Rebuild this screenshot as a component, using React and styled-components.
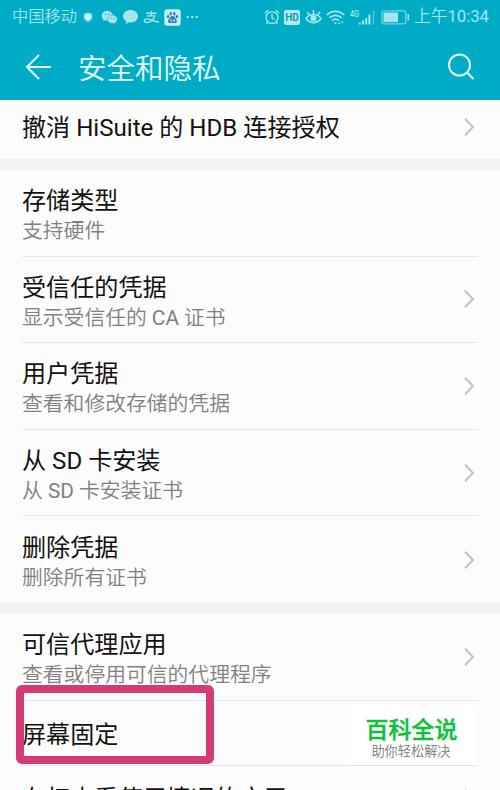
import styled, { createGlobalStyle } from 'styled-components';

const GlobalStyle = createGlobalStyle`
  * {
    box-sizing: border-box;
  }

  body {
    margin: 0;
    overflow: hidden;
    background: #fcfcfc;
    font-family: Roboto, 'Noto Sans CJK SC', sans-serif;
  }
`;

const Screen = styled.div`
  position: relative;
  width: 500px;
  height: 790px;
  overflow: hidden;
  background: #fcfcfc;
`;

const Header = styled.header`
  height: 100px;
  background: #00acc5;
  color: #e6fcff;
`;

const StatusBar = styled.div`
  height: 34px;
  padding: 0 11px 0 12px;
  display: flex;
  align-items: center;
  justify-content: space-between;
  color: #a5e6ee;
`;

const StatusGroup = styled.div`
  display: flex;
  align-items: center;
  gap: ${({ $gap }) => $gap}px;

  svg {
    display: block;
    flex: none;
  }
`;

const Carrier = styled.span`
  margin-right: 1px;
  font-size: 16.3px;
  font-weight: 350;
  line-height: 34px;
  white-space: nowrap;
`;

const Clock = styled(Carrier)`
  font-size: 16.7px;
  margin: 0 0 0 -1px;
`;

const Digits = styled.span`
  font-weight: 400;
`;

const TitleBar = styled.div`
  height: 66px;
  padding: 0 25px 0 25px;
  display: flex;
  align-items: center;
`;

const Title = styled.h1`
  flex: 1;
  margin: 5px 0 0 26px;
  font-size: 28.5px;
  font-weight: 350;
  line-height: 40px;
`;

const Group = styled.section`
  border-bottom: ${({ $last }) => ($last ? 'none' : '11px solid #f2f2f2')};
`;

const Row = styled.div`
  height: ${({ $height }) => $height || 86.6}px;
  margin: 0 22px;
  padding: 0 3px ${({ $bottom }) => $bottom || 0}px 0;
  display: flex;
  align-items: center;
  justify-content: space-between;
  border-bottom: ${({ $line }) => ($line ? '1px solid #e6e6e6' : 'none')};
`;

const RowText = styled.div`
  padding-top: ${({ $top }) => $top || 0}px;
  white-space: nowrap;
`;

const RowTitle = styled.div`
  font-size: 24.1px;
  font-weight: 400;
  line-height: 31px;
  color: #111;
`;

const RowSummary = styled.div`
  font-size: 20.8px;
  font-weight: 350;
  line-height: 29px;
  color: #808080;
`;

const Latin = styled.span`
  font-weight: 400;
`;

const Highlight = styled.div`
  position: absolute;
  left: 16px;
  top: 685px;
  width: 198px;
  height: 79px;
  border: 8px solid #d53a75;
  border-radius: 6px;
`;

const Watermark = styled.div`
  position: absolute;
  left: 350px;
  top: 705px;
  width: 125px;
  height: 59px;
  padding-top: 10px;
  background: #fff;
  text-align: center;
`;

const WatermarkName = styled.div`
  margin-left: -2px;
  font-size: 23px;
  font-weight: 500;
  line-height: 31px;
  color: #0cc23a;
  -webkit-text-stroke: 0.4px #0cc23a;
`;

const WatermarkSlogan = styled.div`
  margin-left: -3px;
  font-size: 13.2px;
  font-weight: 350;
  line-height: 11px;
  color: #777;
`;

const ShieldIcon = () => (
  <svg width="14" height="14" viewBox="0 0 14 14">
    <path d="M6 1 11 3v4c0 3-2 5-5 6-3-1-5-3-5-6V3Z" fill="#22b0f0" />
    <path d="M6 2.900 9.700 4.300V7c0 2-1.600 3.700-3.700 4.500C3.900 10.700 2.300 9 2.300 7V4.300Z" fill="#c4f3fa" />
  </svg>
);

const WechatIcon = () => (
  <svg width="17" height="15" viewBox="0 0 17 15">
    <path d="M6.300 1C3 1 .6 3.100.6 5.800c0 1.500.8 2.800 2 3.700L2.100 11.300 4.200 10.200c.7.200 1.400.3 2.100.3C9.500 10.500 12 8.400 12 5.800S9.500 1 6.300 1Z" fill="currentColor" />
    <path d="M11.500 5C8.700 5 6.500 6.900 6.500 9.300s2.200 4.200 5 4.200c.6 0 1.100-.1 1.600-.2l1.800.9-.4-1.500c1.200-.8 1.900-2 1.900-3.400C16.400 6.900 14.200 5 11.500 5Z" fill="currentColor" stroke="#00acc5" strokeWidth=".5" />
    <g fill="#00acc5">
      <circle cx="4.500" cy="4.500" r=".8" />
      <circle cx="8" cy="4.500" r=".8" />
      <circle cx="9.900" cy="8.300" r=".6" />
      <circle cx="13.100" cy="8.300" r=".6" />
    </g>
  </svg>
);

const BubbleIcon = () => (
  <svg width="17" height="16" viewBox="0 0 17 16">
    <path d="M8.500 1C4.300 1 1 3.700 1 7.200c0 2.300 1.300 4.200 3.400 5.300L3.700 15.200 7.200 13.300l1.300.1c4.200 0 7.500-2.700 7.500-6.200S12.700 1 8.500 1Z" fill="currentColor" />
  </svg>
);

const AlipayIcon = () => (
  <svg width="17" height="14" viewBox="0 0 17 14" fill="none" stroke="currentColor" strokeWidth="1.400">
    <path d="M3 3.300H13.500M8.200.7v5M4 5.900h7.800C10.600 9.200 7.500 12.400 3.900 12.400c-3.500 0-3.500-3.500-.3-3.500 3.600 0 7.300 3 12.500 3.200" />
  </svg>
);

const PawIcon = () => (
  <svg width="17" height="17" viewBox="0 0 17 17">
    <rect x=".3" y=".3" width="16.400" height="16.400" rx="2.500" fill="#c4f1f7" />
    <g fill="#2378c8">
      <ellipse cx="4.100" cy="7.500" rx="1.200" ry="1.600" />
      <ellipse cx="6.700" cy="4.700" rx="1.200" ry="1.700" />
      <ellipse cx="10.300" cy="4.700" rx="1.200" ry="1.700" />
      <ellipse cx="12.900" cy="7.500" rx="1.200" ry="1.600" />
      <path d="M8.500 7c-2 0-2.300 1.900-3.500 2.900-1.800 1.700-.8 4.200 1.200 4.200.9 0 1.400-.3 2.300-.3s1.400.3 2.300.3c2 0 3-2.500 1.200-4.200C10.800 8.900 10.500 7 8.500 7Z" />
    </g>
    <path d="M6.500 10.300v2h1.300v-2M9.300 10.300v2h1.500v-2" fill="none" stroke="#c4f1f7" strokeWidth=".7" />
  </svg>
);

const MoreIcon = () => (
  <svg width="14" height="4" viewBox="0 0 14 4" fill="currentColor">
    <circle cx="2.700" cy="2" r="1.200" />
    <circle cx="7.200" cy="2" r="1.200" />
    <circle cx="11.700" cy="2" r="1.200" />
  </svg>
);

const AlarmIcon = () => (
  <svg width="16" height="16" viewBox="0 0 16 16" fill="none" stroke="currentColor" strokeWidth="1.400">
    <circle cx="8" cy="8.500" r="5.900" />
    <path d="M8 5v4l2.500 1.500M.8 4.300 4 1.200M15.200 4.300 12 1.200M3.800 13 2.500 14.700M12.200 13l1.300 1.700" />
  </svg>
);

const HdBadge = styled.span`
  width: 16px;
  height: 15px;
  border-radius: 2px;
  background: #b4eaf1;
  color: #079fb8;
  font-size: 10px;
  font-weight: 700;
  line-height: 15px;
  text-align: center;
`;

const EyeIcon = () => (
  <svg width="17" height="16" viewBox="0 0 17 16" fill="none" stroke="currentColor" strokeWidth="1.500">
    <path d="M1 9.500C4.600 4.200 12.400 4.200 16 9.500 12.400 15 4.600 15 1 9.500ZM8.500 4.700V1M4.200 5.500 2 3M12.800 5.500 15 3" />
    <circle cx="8.500" cy="9.400" r="2.300" fill="currentColor" />
  </svg>
);

const WifiIcon = () => (
  <svg width="19" height="15" viewBox="0 0 19 15" fill="none" stroke="currentColor" strokeWidth="1.700">
    <path d="M.8 5c4.800-4.800 12.600-4.800 17.400 0M3.500 7.900c3.400-3.300 8.600-3.300 12 0M6.200 10.600c2-1.800 4.600-1.800 6.600 0" />
    <path d="m7.400 12.500 2 2 1.500-2ZM12 13.800l1.300-2 1.300 2ZM15 11.500l1.300 2 1.300-2Z" fill="currentColor" stroke="none" />
  </svg>
);

const SignalIcon = () => (
  <svg width="25" height="18" viewBox="0 0 25 18">
    <text x="0" y="8.500" fill="currentColor" fontFamily="Roboto, sans-serif" fontSize="9.500" fontWeight="500" textLength="9" lengthAdjust="spacingAndGlyphs">4G</text>
    <path d="M9.800 16.500v-2M13 16.500v-4M16.200 16.500V10M19.400 16.500V6.500" stroke="currentColor" strokeWidth="2" />
    <path d="M23.500 16.500v-14" stroke="#5cc9d8" strokeWidth="1.200" />
  </svg>
);

const BatteryIcon = () => (
  <svg width="31" height="15" viewBox="-2 0 31 15">
    <rect x=".8" y=".8" width="24" height="13" rx="2" fill="none" stroke="#72d4e0" strokeWidth="1.300" />
    <rect x="2.500" y="2.500" width="14.500" height="9.600" fill="currentColor" />
    <path d="M27.300 4v6.500" stroke="currentColor" strokeWidth="1.600" />
  </svg>
);

const BackIcon = () => (
  <svg width="27" height="28" viewBox="0 0 27 28" fill="none" stroke="currentColor" strokeWidth="2">
    <path d="M14 2 2 14l12 12M2 14h24" />
  </svg>
);

const SearchIcon = () => (
  <svg width="28" height="28" viewBox="0 0 28 28" fill="none" stroke="currentColor" strokeWidth="2">
    <circle cx="12.500" cy="12" r="10.500" />
    <path d="m20 19.500 6.500 6.500" />
  </svg>
);

const Chevron = () => (
  <svg width="12" height="20" viewBox="0 0 12 20" fill="none" stroke="#c2c2c2" strokeWidth="2">
    <path d="m2 1.800 8 8.200-8 8.200" />
  </svg>
);

const CREDENTIALS = [
  { title: '存储类型', summary: '支持硬件' },
  {
    title: '受信任的凭据',
    summary: (
      <>
        显示受信任的 <Latin>CA</Latin> 证书
      </>
    ),
    arrow: true,
  },
  { title: '用户凭据', summary: '查看和修改存储的凭据', arrow: true },
  {
    title: '从 SD 卡安装',
    summary: (
      <>
        从 <Latin>SD</Latin> 卡安装证书
      </>
    ),
    arrow: true,
  },
  { title: '删除凭据', summary: '删除所有证书', arrow: true },
];

const SettingRow = ({ title, summary, arrow, height, line, top, bottom }) => (
  <Row $height={height} $line={line} $bottom={bottom}>
    <RowText $top={top}>
      <RowTitle>{title}</RowTitle>
      {summary && <RowSummary>{summary}</RowSummary>}
    </RowText>
    {arrow && <Chevron />}
  </Row>
);

const App = () => {
  return (
    <Screen>
      <GlobalStyle />
      <Header>
        <StatusBar>
          <StatusGroup $gap={4.2}>
            <Carrier>中国移动</Carrier>
            <ShieldIcon />
            <WechatIcon />
            <BubbleIcon />
            <AlipayIcon />
            <PawIcon />
            <MoreIcon />
          </StatusGroup>
          <StatusGroup $gap={4.6}>
            <AlarmIcon />
            <HdBadge>HD</HdBadge>
            <EyeIcon />
            <WifiIcon />
            <SignalIcon />
            <BatteryIcon />
            <Clock>
              上午<Digits>10:34</Digits>
            </Clock>
          </StatusGroup>
        </StatusBar>
        <TitleBar>
          <BackIcon />
          <Title>安全和隐私</Title>
          <SearchIcon />
        </TitleBar>
      </Header>

      <Group>
        <SettingRow title="撤消 HiSuite 的 HDB 连接授权" arrow height={59} top={2} bottom={5} />
      </Group>
      <Group>
        {CREDENTIALS.map((item, index) => (
          <SettingRow key={item.title} {...item} top={7} line={index < CREDENTIALS.length - 1} />
        ))}
      </Group>
      <Group $last>
        <SettingRow title="可信代理应用" summary="查看或停用可信的代理程序" arrow top={7} line />
        <SettingRow title="屏幕固定" height={65} top={5} line />
        <SettingRow title="有权查看使用情况的应用" arrow height={65} top={3} />
      </Group>

      <Highlight />
      <Watermark>
        <WatermarkName>百科全说</WatermarkName>
        <WatermarkSlogan>助你轻松解决</WatermarkSlogan>
      </Watermark>
    </Screen>
  );
};

export default App;
